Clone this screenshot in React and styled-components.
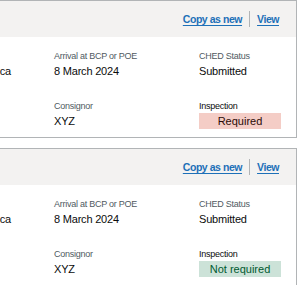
import React from "react";
import styled, { createGlobalStyle } from "styled-components";

const Global = createGlobalStyle`
  html, body { margin: 0; padding: 0; background: #ffffff; }
  body {
    font-family: "Liberation Sans", Arial, sans-serif;
    color: #0b0c0c;
    overflow: hidden;
    width: 301px;
    height: 285px;
  }
`;

const List = styled.div`
  display: flex;
  flex-direction: column;
  gap: 10px;
  margin-left: -63px;
  width: 360px;
`;

const Card = styled.section`
  border: 1px solid #b1b4b6;
`;

const Header = styled.div`
  height: 36px;
  background: #f3f2f1;
  display: flex;
  align-items: center;
  justify-content: flex-end;
  padding-right: 17px;
  gap: 7px;
`;

const Link = styled.a`
  font-size: 10.5px;
  font-weight: 700;
  color: #1d70b8;
  text-decoration: underline;
  text-underline-offset: 2px;
  letter-spacing: -0.45px;
  cursor: pointer;
`;

const Sep = styled.span`
  width: 1px;
  height: 16px;
  background: #b1b4b6;
`;

const Body = styled.div`
  display: grid;
  grid-template-columns: 90px 135px 82px;
  column-gap: 10px;
  row-gap: 21px;
  padding: 13px 15px 8px 16px;
`;

const Field = styled.div`
  display: flex;
  flex-direction: column;
  gap: ${(p) => (p.$tight ? "1px" : "1px")};
`;

const Label = styled.div`
  font-size: 9px;
  line-height: 12px;
  letter-spacing: -0.25px;
  color: ${(p) => (p.$dark ? "#0b0c0c" : "#505a5f")};
`;

const Value = styled.div`
  font-size: 11px;
  line-height: 16px;
  letter-spacing: -0.2px;
  color: #0b0c0c;
  white-space: nowrap;
`;

const Tag = styled.div`
  height: 16px;
  line-height: 16px;
  font-size: 11px;
  text-align: center;
  background: ${(p) => (p.$ok ? "#cce2d8" : "#f4cdc6")};
  color: ${(p) => (p.$ok ? "#005a30" : "#2a0b06")};
`;

function Notification({ required }) {
  return (
    <Card>
      <Header>
        <Link>Copy as new</Link>
        <Sep />
        <Link>View</Link>
      </Header>
      <Body>
        <Field>
          <Label>Origin</Label>
          <Value>South Africa</Value>
        </Field>
        <Field>
          <Label>Arrival at BCP or POE</Label>
          <Value>8 March 2024</Value>
        </Field>
        <Field>
          <Label>CHED Status</Label>
          <Value>Submitted</Value>
        </Field>
        <Field />
        <Field>
          <Label>Consignor</Label>
          <Value>XYZ</Value>
        </Field>
        <Field>
          <Label $dark>Inspection</Label>
          <Tag $ok={!required}>{required ? "Required" : "Not required"}</Tag>
        </Field>
      </Body>
    </Card>
  );
}

export default function App() {
  return (
    <>
      <Global />
      <List>
        <Notification required />
        <Notification required={false} />
      </List>
    </>
  );
}
